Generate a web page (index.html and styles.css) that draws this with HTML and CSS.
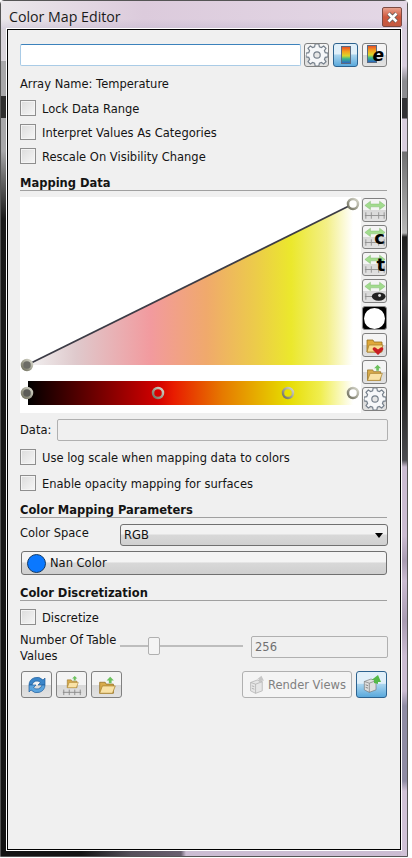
FILE: index.html
```html
<!DOCTYPE html>
<html lang="en">
<head>
    <title>Color Map Editor</title>
    <link rel="stylesheet" href="styles.css">
</head>
<body>
    <svg class="icon-defs" width="0" height="0">
        <defs>
            <symbol id="gear" viewBox="0 2 24 24">
                <path d="M10 2h4l.6 3 2.200.9 2.500-1.700 2.500 2.500-1.700 2.500.9 2.200 3 .6v4l-3 .6-.9 2.200 1.700 2.500-2.500 2.500-2.500-1.700-2.200.9-.6 3h-4l-.6-3-2.200-.9-2.500 1.700-2.500-2.500 1.700-2.500-.9-2.200-3-.6v-4l3-.6.9-2.200-1.700-2.500 2.500-2.500 2.500 1.700 2.200-.9z" fill="#f6f7f9" stroke="#76808c" stroke-width="1.300"/>
                <circle cx="12" cy="14" r="3.500" fill="#e6e6e6" stroke="#76808c" stroke-width="1.300"/>
            </symbol>
            <symbol id="arrows" viewBox="0 0 24 24">
                <path d="M1 7l6-4.500v3h10v-3L23 7l-6 4.500v-3H7v3z" fill="#a2dc8e" stroke="#86bd75" stroke-width=".6"/>
            </symbol>
            <symbol id="range" viewBox="0 0 24 24">
                <use href="#arrows" width="24" height="24"/>
                <path d="M1 18h22M2 14.500v7M8 14.500v7M16 14.500v7M22 14.500v7" stroke="#909090" fill="none"/>
            </symbol>
            <symbol id="folder" viewBox="0 0 24 24">
                <path d="M4 9h6l1 2h8v10H4z" fill="#d8ab4c" stroke="#8f6b20" stroke-width=".8"/>
                <path d="M4 21l3-8h14l-3 8z" fill="#f9e2a6" stroke="#a9822f" stroke-width=".8"/>
                <path d="M14 10V7h-2.500l4-4 4 4H17v3z" fill="#6cc15e"/>
            </symbol>
            <symbol id="views" viewBox="0 0 24 24">
                <path d="M4 9l8-3 6 2v11l-8 3-6-3z" fill="#dedede" stroke="#777" stroke-width=".8"/>
                <path d="M10 11v11M4 9l6 2 8-3" fill="none" stroke="#777" stroke-width=".8"/>
                <path d="M5.500 13l3 1M5.500 16l3 1" stroke="#777"/>
            </symbol>
        </defs>
    </svg>

    <div class="window">
        <div class="titlebar">
            <span class="title">Color Map Editor</span>
            <button class="close"><svg width="13" height="13" viewBox="0 0 13 13"><path d="M2.500 2.500l8 8M10.500 2.500l-8 8" stroke="#5a5a5a" stroke-width="4.200"/><path d="M2.500 2.500l8 8M10.500 2.500l-8 8" stroke="#fff" stroke-width="2.600"/></svg></button>
        </div>

        <div class="panel">
            <div class="search-row">
                <input class="search" type="text">
                <button class="tool"><svg width="22" height="22"><use href="#gear"/></svg></button>
                <button class="tool on"><svg width="10" height="18" viewBox="0 0 10 18"><defs><linearGradient id="rainbow" x2="0" y2="1"><stop offset="0" stop-color="#e5482a"/><stop offset=".3" stop-color="#f5a21d"/><stop offset=".55" stop-color="#d8d82c"/><stop offset=".72" stop-color="#3bb88a"/><stop offset="1" stop-color="#2a5cc7"/></linearGradient></defs><rect x=".5" y=".5" width="9" height="17" fill="url(#rainbow)" stroke="#5a6a80"/></svg></button>
                <button class="tool"><svg class="map-icon" width="10" height="18" viewBox="0 0 10 18"><rect x=".5" y=".5" width="9" height="17" fill="url(#rainbow)" stroke="#5a6a80"/></svg><span class="letter letter-e">e</span></button>
            </div>

            <div class="array-name">Array Name: Temperature</div>
            <label class="check"><span class="box"></span>Lock Data Range</label>
            <label class="check"><span class="box"></span>Interpret Values As Categories</label>
            <label class="check"><span class="box"></span>Rescale On Visibility Change</label>

            <div class="section mapping">Mapping Data</div>

            <div class="editor">
                <svg class="graph" width="341" height="216" viewBox="0 0 341 216">
                    <defs>
                        <linearGradient id="opacity" x1="7" x2="333" y1="0" y2="0" gradientUnits="userSpaceOnUse">
                            <stop offset="0" stop-color="#f2f2f2"/>
                            <stop offset=".15" stop-color="#dfc9cc"/>
                            <stop offset=".38" stop-color="#f29a9e"/>
                            <stop offset=".55" stop-color="#f0a96c"/>
                            <stop offset=".7" stop-color="#eccb4a"/>
                            <stop offset=".81" stop-color="#ebe82c"/>
                            <stop offset=".92" stop-color="#f3ef88"/>
                            <stop offset="1" stop-color="#ffffff"/>
                        </linearGradient>
                        <linearGradient id="colors" x1="7" x2="333" y1="0" y2="0" gradientUnits="userSpaceOnUse">
                            <stop offset="0" stop-color="#000"/>
                            <stop offset=".4" stop-color="#d20000"/>
                            <stop offset=".45" stop-color="#e81c00"/>
                            <stop offset=".6" stop-color="#e67a00"/>
                            <stop offset=".8" stop-color="#e6dc00"/>
                            <stop offset=".9" stop-color="#f0ee50"/>
                            <stop offset="1" stop-color="#ffffff"/>
                        </linearGradient>
                        <linearGradient id="ring" x1="1" y1="0" x2="0" y2="1">
                            <stop offset="0" stop-color="#d8d8cc"/>
                            <stop offset="1" stop-color="#6e6e5c"/>
                        </linearGradient>
                    </defs>
                    <rect width="341" height="216" fill="#fff"/>
                    <polygon points="7,168 333,7 333,168" fill="url(#opacity)"/>
                    <line x1="7" y1="168" x2="333" y2="7" stroke="#3c3c46" stroke-width="1.800"/>
                    <rect x="8" y="184" width="325" height="24" fill="url(#colors)"/>
                    <circle cx="7" cy="168" r="5" fill="#6c6c66" stroke="url(#ring)" stroke-width="2.500"/>
                    <circle cx="333" cy="7" r="5" fill="#fff" stroke="url(#ring)" stroke-width="2.500"/>
                    <circle cx="7" cy="196" r="5" fill="#5c5c58" stroke="url(#ring)" stroke-width="2.500"/>
                    <circle cx="138" cy="196" r="5" fill="#d80000" stroke="url(#ring)" stroke-width="2.500"/>
                    <circle cx="268" cy="196" r="5" fill="#e8e000" stroke="url(#ring)" stroke-width="2.500"/>
                    <circle cx="333" cy="196" r="5" fill="#fff" stroke="url(#ring)" stroke-width="2.500"/>
                </svg>
                <div class="side-tools">
                    <button class="tool"><svg width="22" height="22"><use href="#range"/></svg></button>
                    <button class="tool"><svg width="22" height="22"><use href="#range"/></svg><span class="letter letter-c">c</span></button>
                    <button class="tool"><svg width="22" height="22"><use href="#range"/></svg><span class="letter letter-c">t</span></button>
                    <button class="tool"><svg width="22" height="22" viewBox="0 0 24 24"><use href="#arrows" width="24" height="24"/><path d="M1 18h8M2 14.500v7" stroke="#909090" fill="none"/><ellipse cx="16" cy="18" rx="7.500" ry="4.500" fill="#222"/><circle cx="17" cy="17" r="1.600" fill="#ddd"/></svg></button>
                    <button class="tool black"><span class="white-dot"></span></button>
                    <button class="tool"><svg width="21" height="21" viewBox="0 0 21 21"><path d="M3 5h6l1 2h8v10H3z" fill="#e0a93a" stroke="#96701f" stroke-width=".8"/><path d="M3 17l2-7h14l-2 7z" fill="#f8dc8f" stroke="#a9822f" stroke-width=".8"/><path d="M14 20l-5-5c-1.500-2 1.500-4 3-2l2 1.500 2-1.500c1.500-2 4.500 0 3 2z" fill="#c81e22"/></svg></button>
                    <button class="tool"><svg width="21" height="21"><use href="#folder"/></svg></button>
                    <button class="tool"><svg width="22" height="22"><use href="#gear"/></svg></button>
                </div>
            </div>

            <div class="data-row">
                <span class="data-label">Data:</span>
                <input class="field grow" type="text" disabled>
            </div>

            <label class="check log"><span class="box"></span>Use log scale when mapping data to colors</label>
            <label class="check opac"><span class="box"></span>Enable opacity mapping for surfaces</label>

            <div class="section params">Color Mapping Parameters</div>

            <div class="space-row">
                <span class="space-label">Color Space</span>
                <div class="combo">RGB<span class="arrow"></span></div>
            </div>
            <button class="nan"><span class="swatch"></span>Nan Color</button>

            <div class="section discrete">Color Discretization</div>

            <label class="check disc"><span class="box"></span>Discretize</label>

            <div class="table-row">
                <span class="table-label">Number Of Table<br>Values</span>
                <div class="slider"><span class="slider-handle"></span></div>
                <input class="field values" type="text" value="256" disabled>
            </div>

            <div class="bottom-row">
                <button class="tool wide"><svg width="24" height="24" viewBox="0 0 24 24"><path d="M4 12a8 8 0 0 1 14-5l2-2v7h-7l2.500-2.500A5 5 0 0 0 7 12z" fill="#3b86c9" stroke="#1f5f9e" stroke-width=".7"/><path d="M20 12a8 8 0 0 1-14 5l-2 2v-7h7l-2.500 2.500A5 5 0 0 0 17 12z" fill="#5ba4de" stroke="#1f5f9e" stroke-width=".7"/></svg></button>
                <button class="tool wide"><svg width="22" height="22" viewBox="0 0 24 24"><use href="#folder" width="17" height="17" x="4" y="0"/><path d="M2 20h20M3 17v6M9 17v6M15 17v6M21 17v6" stroke="#8a8a8a" fill="none"/></svg></button>
                <button class="tool wide"><svg width="22" height="22"><use href="#folder"/></svg></button>
                <span class="spacer"></span>
                <button class="render"><svg width="18" height="20" viewBox="0 0 21 24" class="faded"><use href="#views" width="24" height="24"/><path d="M14 9V5h-2l5-4 3 6h-3v2z" fill="#aaa"/></svg>Render Views</button>
                <button class="tool wide on"><svg width="22" height="22" viewBox="0 0 22 22"><use href="#views" width="20" height="20"/><path d="M13 9V6h-2.500L17 1l3 7h-3v2z" fill="#54b948"/></svg></button>
            </div>
        </div>
    </div>
</body>
</html>
```

FILE: styles.css
```css
/* Windows 7 style dialog */
* {
    box-sizing: border-box;
}

body {
    margin: 0;
    background-color: #ffffff;
    font-family: "DejaVu Sans", sans-serif;
    font-size: 11.5px;
    color: #141414;
    height: 858px;
    overflow: hidden;
}

.icon-defs {
    position: absolute;
}

.window {
    width: 408px;
    height: 857px;
    padding: 0 6px 6px 6px;
    border: 1px solid #555555;
    border-radius: 4px 4px 0 0;
    background-color: #cdbcd3;
    background-image:
        linear-gradient(to bottom, #d8d4da 0 60px, #a8a8aa 60px 95px, #2e2e2e 95px 117px, #a8a8aa 117px 150px, #6e6e6e 175px, #1a1a1a 218px, #141414 100%),
        linear-gradient(to bottom, #d8cede 0 65px, #8c8c90 80px 97px, #333336 97px 117px, #d8cede 118px 150px, #707072 151px, #b8b8b8 232px, #1c1c1c 236px, #444448 300px, #1c1c1c 380px, #4c4c50 459px, #cbbcd2 466px, #cbbcd2 535px, #a99cb2 560px, #cbbcd2 580px, #a99cb2 620px, #cbbcd2 655px, #cbbcd2 690px, #8f8ca4 705px, #8f8ca4 780px, #d0c2d6 790px),
        linear-gradient(to right, #141414 0 80px, #55505a 130px, #6a6070 180px, #cbbcd2 185px);
    background-size: 6px 100%, 6px 100%, 100% 6px;
    background-position: left top, right top, left bottom;
    background-repeat: no-repeat;
    display: flex;
    flex-direction: column;
}

.titlebar {
    height: 28px;
    flex: none;
    display: flex;
    align-items: flex-start;
    justify-content: space-between;
    margin: 0 -6px 0 -6px;
    padding-left: 8px;
    background:
        linear-gradient(to bottom, transparent 18px, rgba(190, 180, 205, .45) 28px),
        linear-gradient(to right, #ebe8eb, #dccbdc 35%, #e4d8e6 100%);
}

.title {
    font-family: "Open Sans", sans-serif;
    font-size: 14.2px;
    line-height: 31px;
    color: #1a1a1a;
}

.close {
    width: 20px;
    height: 20px;
    margin: 6px 5px 0 0;
    padding: 0;
    border: 1px solid #7d4a42;
    border-radius: 2px;
    background: linear-gradient(to bottom, #e8a18e, #d0573c 50%, #c25a42);
    display: flex;
    align-items: center;
    justify-content: center;
}

.panel {
    flex: 1;
    border: 1px solid #000000;
    outline: 1px solid #ffffff;
    background-color: #f0f0f0;
    padding: 13px 12px 0 12px;
    display: flex;
    flex-direction: column;
}

.search-row {
    display: flex;
    align-items: center;
    gap: 4px;
}

.search {
    width: 281px;
    height: 22px;
    margin-right: -1px;
    border: 1px solid #a9cbe6;
    border-top-color: #3c82bc;
    border-radius: 2px;
    background: #fff;
}

.tool {
    width: 25px;
    height: 24px;
    padding: 0;
    border: 1px solid #808080;
    border-radius: 3px;
    background: linear-gradient(to bottom, #f4f4f4 0 50%, #d8d8d8 50%, #e2e2e2);
    display: flex;
    align-items: center;
    justify-content: center;
    flex: none;
    position: relative;
}

.tool.on {
    border-color: #2c628f;
    background: linear-gradient(to bottom, #e0eff9 0 45%, #a9d4ee 50%, #5aa9dc);
}

.map-icon {
    margin: 0 6px 2px 0;
}

.letter {
    position: absolute;
    font-family: "DejaVu Sans", sans-serif;
    font-weight: bold;
    line-height: 1;
    color: #000;
}

.letter-e {
    right: 2px;
    bottom: 2px;
    font-style: oblique;
    font-size: 17px;
}

.letter-c {
    right: 1px;
    bottom: 1px;
    font-size: 18px;
}

.array-name {
    margin-top: 10px;
    line-height: 15px;
}

.check {
    display: flex;
    align-items: flex-start;
    gap: 6px;
    height: 16px;
    line-height: 18px;
    margin-top: 8px;
}

.box {
    width: 16px;
    height: 16px;
    flex: none;
    border: 1px solid #8e8e8e;
    background: linear-gradient(135deg, #dcdcdc, #f6f6f6);
    box-shadow: inset 0 0 0 1px #f4f4f4;
}

.section {
    font-weight: bold;
    line-height: 14px;
    padding-top: 2px;
    border-bottom: 1px solid #a0a0a0;
    margin-right: 1px;
}

.mapping {
    margin-top: 10px;
}

.editor {
    display: flex;
    gap: 1px;
    height: 216px;
    margin-top: 6px;
}

.graph {
    display: block;
    flex: none;
}

.side-tools {
    display: flex;
    flex-direction: column;
    gap: 3px;
    margin-top: 1px;
}

.black {
    background: #000;
    border-color: #8a8a8a;
}

.white-dot {
    width: 21px;
    height: 21px;
    border-radius: 50%;
    background: #fff;
}

.data-row {
    display: flex;
    align-items: center;
    gap: 7px;
    margin-top: 6px;
}

.data-label {
    width: 30px;
}

.field {
    height: 22px;
    border: 1px solid #b0b0b0;
    border-radius: 2px;
    background: #f0f0f0;
    font-family: inherit;
    font-size: 11.5px;
    color: #707070;
    padding: 0 3px;
}

.grow {
    width: 331px;
}

.log {
    margin-top: 8px;
}

.opac {
    margin-top: 10px;
}

.params {
    margin-top: 10px;
}

.space-row {
    display: flex;
    align-items: flex-start;
    margin-top: 6px;
}

.space-label {
    width: 100px;
    line-height: 15px;
    padding-top: 2px;
}

.combo {
    width: 268px;
    height: 22px;
    border: 1px solid #707070;
    border-radius: 3px;
    background: linear-gradient(to bottom, #f2f2f2 0 45%, #d8d8d8 50%, #d0d0d0);
    padding-left: 3px;
    line-height: 21px;
    position: relative;
}

.arrow {
    position: absolute;
    right: 4px;
    top: 8px;
    border: 4px solid transparent;
    border-top: 5px solid #000;
    border-bottom: 0;
}

.nan {
    width: 366px;
    height: 24px;
    margin: 5px 0 0 1px;
    border: 1px solid #707070;
    border-radius: 3px;
    background: linear-gradient(to bottom, #f4f4f4 0 45%, #d8d8d8 50%, #cfcfcf);
    display: flex;
    align-items: center;
    gap: 4px;
    padding: 0 0 0 5px;
    font-family: inherit;
    font-size: 11.5px;
    color: #141414;
}

.swatch {
    width: 19px;
    height: 19px;
    border-radius: 50%;
    background: #0a78ff;
    border: 1px solid #123a66;
}

.discrete {
    margin-top: 9px;
}

.disc {
    margin-top: 8px;
}

.table-row {
    display: flex;
    align-items: flex-start;
    margin-top: 7px;
}

.table-label {
    width: 100px;
    line-height: 16px;
}

.slider {
    width: 123px;
    height: 2px;
    margin-top: 13px;
    background: #bdbdbd;
    position: relative;
}

.slider-handle {
    position: absolute;
    left: 28px;
    top: -8px;
    width: 12px;
    height: 18px;
    border: 1px solid #b0b0b0;
    border-radius: 2px;
    background: #f4f4f4;
}

.values {
    width: 137px;
    margin: 4px 0 0 8px;
}

.bottom-row {
    display: flex;
    align-items: center;
    gap: 4px;
    margin-top: 7px;
    padding: 0 1px;
}

.wide {
    width: 31px;
    height: 27px;
}

.spacer {
    flex: 1;
}

.render {
    width: 110px;
    height: 27px;
    padding: 0 0 0 4px;
    border: 1px solid #b0b0b0;
    border-radius: 3px;
    background: #f4f4f4;
    display: flex;
    align-items: center;
    gap: 3px;
    font-family: inherit;
    font-size: 11.5px;
    color: #808080;
    white-space: nowrap;
}

.faded {
    opacity: .6;
    flex: none;
}
```
